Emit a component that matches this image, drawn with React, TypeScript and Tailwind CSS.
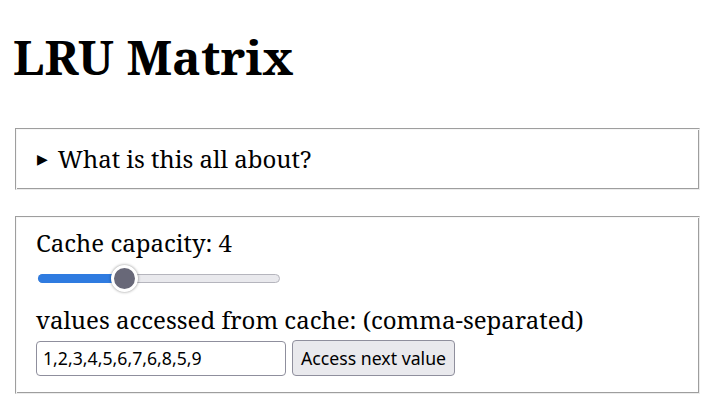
import React from "react";

const groove =
  "border border-t-[#9e9e9e] border-l-[#9e9e9e] border-r-[#ececec] border-b-[#ececec] shadow-[inset_1px_1px_0_#f7f7f7,inset_-1px_-1px_0_#9e9e9e]";

export default function App() {
  const serif = { fontFamily: '"Noto Serif", "DejaVu Serif", serif' };
  return (
    <div className="min-h-[402px] bg-white text-black" style={serif}>
      <div className="px-[13px] pt-[24px]">
        <h1 className="text-[48px] font-bold leading-[65px] m-0">LRU Matrix</h1>
        <div className={`mt-[39px] mx-[2px] ${groove} px-[21px] py-[14px]`}>
          <div className="flex items-center gap-[10px] text-[24px] leading-[32px]">
            <span className="text-[14px] leading-none">▶</span>
            <span>What is this all about?</span>
          </div>
        </div>
        <div className={`mt-[26px] mx-[2px] ${groove} pl-[20px] pr-[20px] pt-[10px] pb-[17px]`}>
          <div className="text-[24px] leading-[32px]">Cache capacity: 4</div>
          <div className="relative mt-[6px] ml-[2px] h-[27px] w-[242px]">
            <div className="absolute left-0 right-0 top-[9px] h-[9px] rounded-full bg-[#e9e9ed] border border-[#b5b5bd]" />
            <div className="absolute left-0 top-[9px] h-[9px] w-[80px] rounded-full bg-[#2f7be0]" />
            <div className="absolute left-[73px] top-0 h-[27px] w-[27px] rounded-full bg-[#686878] border-[3px] border-white shadow-[0_0_3px_rgba(0,0,0,0.45)]" />
          </div>
          <div className="mt-[12px] text-[24px] leading-[32px]">values accessed from cache: (comma-separated)</div>
          <div className="mt-[4px] flex items-center gap-[6px]" style={{ fontFamily: '"Noto Sans", sans-serif' }}>
            <div className="h-[35px] w-[250px] rounded-[4px] border border-[#8f8f9d] bg-white px-[6px] flex items-center text-[17.7px]">1,2,3,4,5,6,7,6,8,5,9</div>
            <button className="h-[36px] rounded-[4px] border border-[#8f8f9d] bg-[#e9e9ed] px-[8px] text-[17.7px] text-black">Access next value</button>
          </div>
        </div>
      </div>
    </div>
  );
}
